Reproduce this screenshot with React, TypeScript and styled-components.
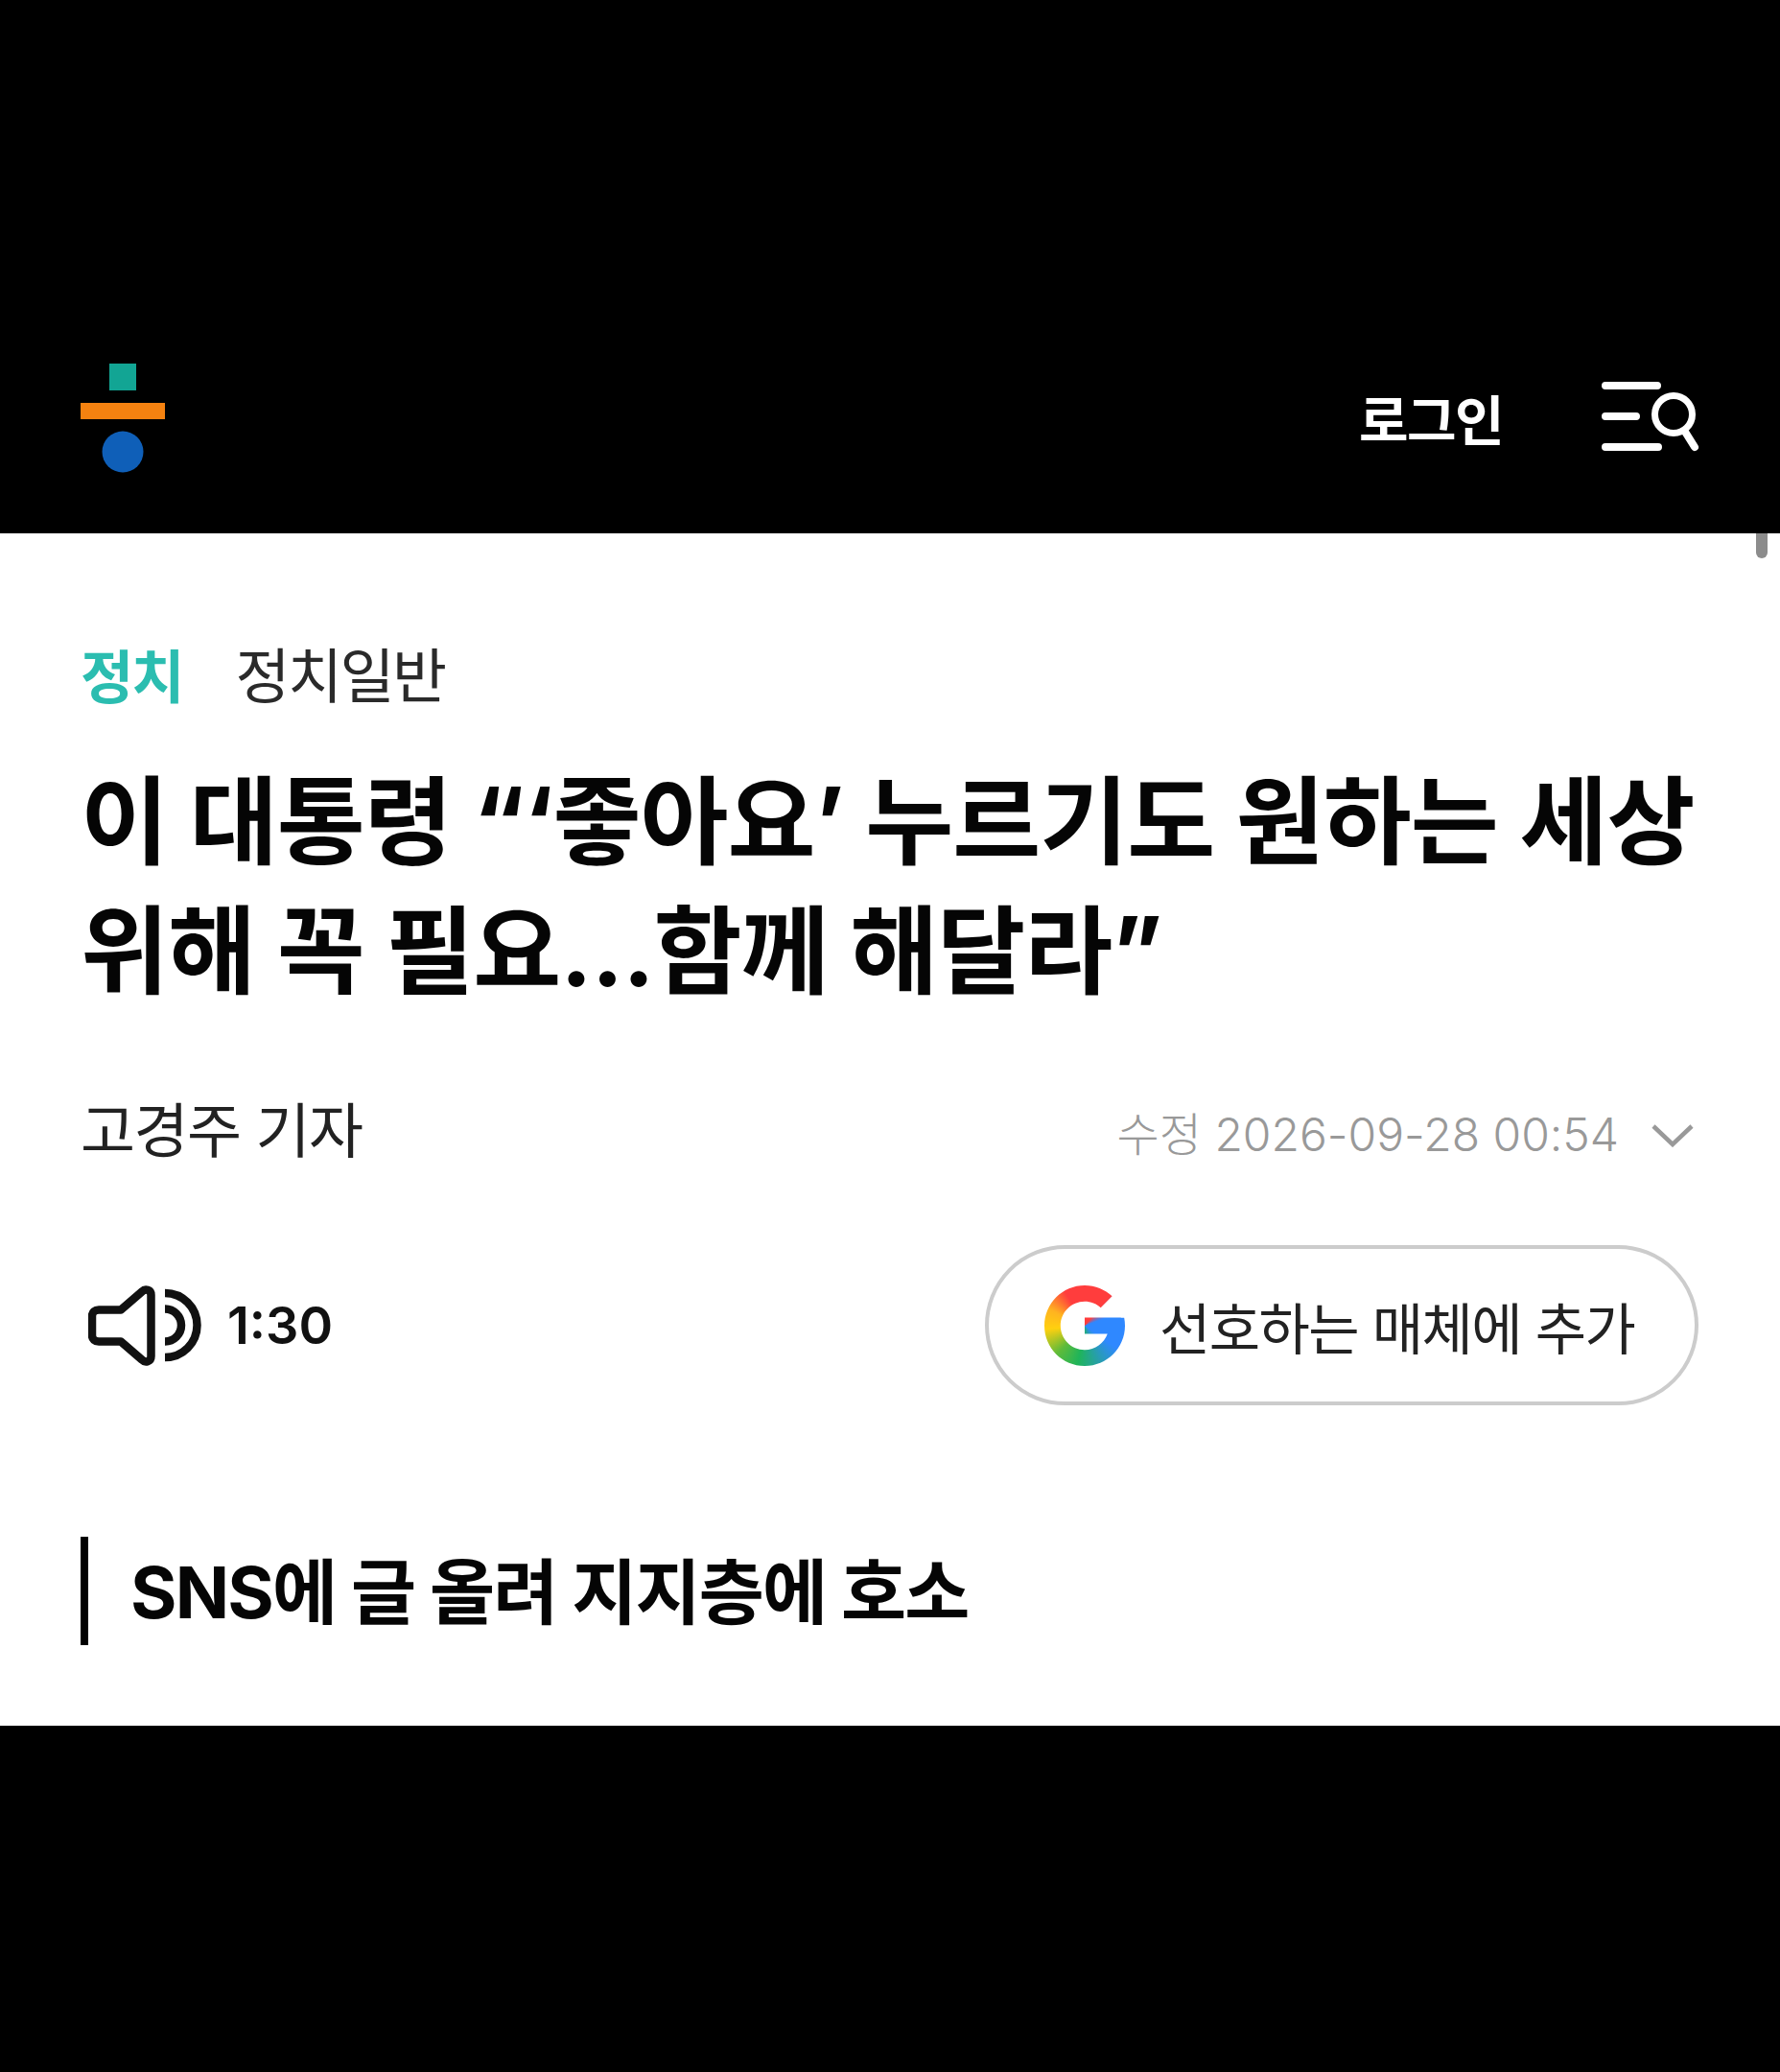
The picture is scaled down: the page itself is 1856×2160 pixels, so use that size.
import React from "react";
import styled, { createGlobalStyle } from "styled-components";

const Global = createGlobalStyle`
  html, body { margin: 0; padding: 0; background: #000; }
  * { box-sizing: border-box; }
`;

const Page = styled.div`
  width: 1856px;
  height: 2160px;
  background: #000;
  font-family: Inter, "Noto Sans CJK KR", "Noto Sans", sans-serif;
  overflow: hidden;
`;
const Header = styled.header`
  height: 556px;
  padding: 316px 80px 0 84px;
  display: flex;
  align-items: center;
  justify-content: space-between;
`;
const HeaderActions = styled.div`
  display: flex;
  align-items: center;
  gap: 103px;
`;
const Login = styled.span`
  color: #fff;
  font-size: 56px;
  font-weight: 700;
  letter-spacing: -1.5px;
  line-height: 1;
  padding-top: 6px;
`;
const Article = styled.main`
  position: relative;
  height: 1243px;
  background: #fff;
  padding: 110px 85px 0 84px;
`;
const ScrollThumb = styled.div`
  position: absolute;
  top: 0;
  right: 13px;
  width: 12px;
  height: 26px;
  background: #8c8c8c;
  border-radius: 0 0 6px 6px;
`;
const Crumbs = styled.div`
  display: flex;
  align-items: center;
  gap: 55px;
  height: 70px;
`;
const Section = styled.span`
  color: #2bbdb0;
  font-size: 60px;
  font-weight: 700;
  letter-spacing: -2px;
`;
const SubSection = styled.span`
  color: #2a2a2a;
  font-size: 62px;
  font-weight: 400;
  letter-spacing: -2.5px;
`;
const Headline = styled.h1`
  margin: 53px 0 0;
  color: #050505;
  font-size: 100px;
  font-weight: 700;
  line-height: 135px;
  letter-spacing: -1px;
  white-space: nowrap;
`;
const Meta = styled.div`
  margin-top: 81px;
  display: flex;
  align-items: center;
  justify-content: space-between;
  height: 70px;
`;
const Reporter = styled.span`
  color: #222;
  font-size: 62px;
  font-weight: 400;
  letter-spacing: -1.5px;
`;
const Modified = styled.div`
  display: flex;
  align-items: center;
  gap: 34px;
  padding: 8px 5px 0 0;
  color: #999;
  font-size: 48px;
  font-weight: 300;
`;
const ChevronIcon = styled.svg`
  margin-top: 10px;
`;
const Controls = styled.div`
  margin-top: 88px;
  display: flex;
  align-items: center;
  justify-content: space-between;
  height: 167px;
`;
const Listen = styled.div`
  display: flex;
  align-items: center;
  gap: 27px;
  padding-left: 8px;
`;
const Duration = styled.span`
  color: #111;
  font-size: 54px;
  font-weight: 600;
`;
const PreferButton = styled.button`
  width: 744px;
  height: 167px;
  border: 4px solid #ccc;
  border-radius: 84px;
  background: #fff;
  display: flex;
  align-items: center;
  gap: 36px;
  padding: 0 0 0 58px;
  font-family: inherit;
  color: #222;
  font-size: 58px;
  letter-spacing: -1.6px;
  white-space: nowrap;
`;
const SubHead = styled.h2`
  margin: 137px 0 0;
  height: 113px;
  border-left: 8px solid #000;
  padding: 0 0 8px 44px;
  display: flex;
  align-items: center;
  color: #050505;
  font-size: 74px;
  font-weight: 700;
  letter-spacing: -1.8px;
`;

const Logo = () => (
  <svg width="88" height="114" viewBox="0 0 88 114">
    <rect x="30" y="0" width="28" height="28" fill="#12a594" />
    <rect x="0" y="41" width="88" height="17" fill="#f58210" />
    <circle cx="44" cy="92" r="21.5" fill="#0f5fb8" />
  </svg>
);
const MenuSearch = () => (
  <svg width="106" height="76" viewBox="0 0 106 76" fill="none" stroke="#fff" strokeWidth="8" strokeLinecap="round">
    <path d="M4 4H58M4 36H36M4 68H59" />
    <circle cx="75" cy="34" r="19.5" strokeWidth="7" />
    <path d="M87 52L97 68" />
  </svg>
);
const Chevron = () => (
  <ChevronIcon width="44" height="24" viewBox="0 0 44 24" fill="none" stroke="#999" strokeWidth="4.5">
    <path d="M2 2L22 21L42 2" />
  </ChevronIcon>
);
const Speaker = () => (
  <svg width="118" height="84" viewBox="0 0 118 84" fill="none" stroke="#111" strokeWidth="8.5">
    <path d="M11 25.5H34L56 6.5C59.5 3 65.5 4.5 65.5 10V74C65.5 79.5 59.5 81 56 77.5L34 58.5H11C7 58.5 4 56 4 52V32C4 28 7 25.5 11 25.5Z" strokeLinejoin="round" />
    <path d="M80 8A33.5 33.5 0 0 1 80 75" />
    <path d="M80 24.5A17 17 0 0 1 80 58.5" />
  </svg>
);
const GClip = styled.div`
  width: 100%;
  height: 100%;
  background: conic-gradient(from 0deg at 50% 50%, #ff3d3d 0deg, #ff3d3d 40deg, #2f88ff 70deg, #2f88ff 125deg, #1fb45a 190deg, #5fbb3a 225deg, #ffd00f 265deg, #ffb320 295deg, #ff3d3d 330deg, #ff3d3d 360deg);
`;
const GoogleG = () => (
  <svg width="84" height="84" viewBox="4 4 40 40" style={{ flex: "none" }}>
    <defs>
      <clipPath id="g-shape">
        <path d="M43.611 20.083H42V20H24v8h11.303c-1.649 4.657-6.08 8-11.303 8-6.627 0-12-5.373-12-12s5.373-12 12-12c3.059 0 5.842 1.154 7.961 3.039l5.657-5.657C34.046 6.053 29.268 4 24 4 12.955 4 4 12.955 4 24s8.955 20 20 20 20-8.955 20-20c0-1.341-.138-2.65-.389-3.917z" />
      </clipPath>
    </defs>
    <g clipPath="url(#g-shape)">
      <foreignObject x="4" y="4" width="40" height="40">
        <GClip />
      </foreignObject>
    </g>
  </svg>
);

export default function App() {
  return (
    <Page>
      <Global />
      <Header>
        <Logo />
        <HeaderActions>
          <Login>로그인</Login>
          <MenuSearch />
        </HeaderActions>
      </Header>
      <Article>
        <ScrollThumb />
        <Crumbs>
          <Section>정치</Section>
          <SubSection>정치일반</SubSection>
        </Crumbs>
        <Headline>
          이 대통령 “‘좋아요’ 누르기도 원하는 세상
          <br />
          위해 꼭 필요...함께 해달라”
        </Headline>
        <Meta>
          <Reporter>고경주 기자</Reporter>
          <Modified>
            수정 2026-09-28 00:54
            <Chevron />
          </Modified>
        </Meta>
        <Controls>
          <Listen>
            <Speaker />
            <Duration>1:30</Duration>
          </Listen>
          <PreferButton>
            <GoogleG />
            선호하는 매체에 추가
          </PreferButton>
        </Controls>
        <SubHead>SNS에 글 올려 지지층에 호소</SubHead>
      </Article>
    </Page>
  );
}
